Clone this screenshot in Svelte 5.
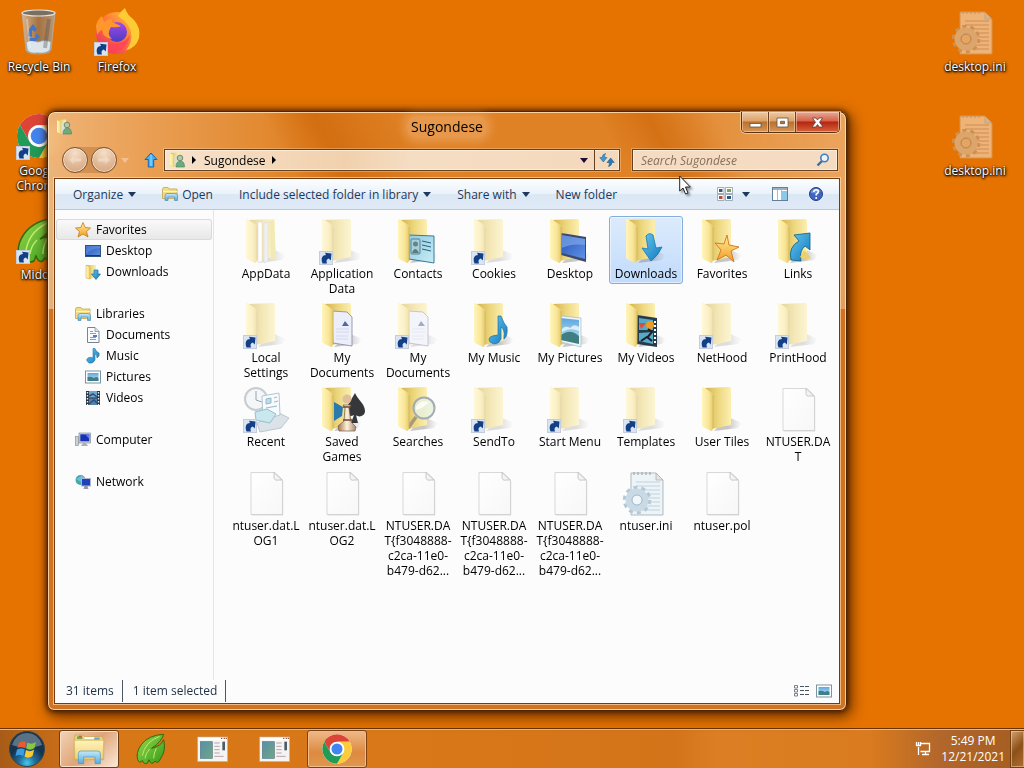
<script>
  const shortcuts = [
    { name: 'Recycle Bin', icon: 'bin', col: 1, row: 1 },
    { name: 'Firefox', icon: 'firefox', col: 2, row: 1, link: true },
    { name: 'Google Chrome', icon: 'chrome', col: 1, row: 2, link: true },
    { name: 'Midori', icon: 'midori', col: 1, row: 3, link: true },
  ];

  const iniFiles = ['desktop.ini', 'desktop.ini'];

  const places = [
    { name: 'Favorites', icon: 'star', children: [
      { name: 'Desktop', icon: 'screen' },
      { name: 'Downloads', icon: 'downloads' },
    ] },
    { name: 'Libraries', icon: 'library', children: [
      { name: 'Documents', icon: 'document' },
      { name: 'Music', icon: 'note' },
      { name: 'Pictures', icon: 'picture' },
      { name: 'Videos', icon: 'film' },
    ] },
    { name: 'Computer', icon: 'computer', children: [] },
    { name: 'Network', icon: 'network', children: [] },
  ];

  const files = [
    { name: 'AppData', icon: 'folder', inner: 'papers', faded: true },
    { name: 'Application Data', icon: 'folder', faded: true, link: true },
    { name: 'Contacts', icon: 'folder', inner: 'card' },
    { name: 'Cookies', icon: 'folder', faded: true, link: true },
    { name: 'Desktop', icon: 'folder', inner: 'screen' },
    { name: 'Downloads', icon: 'folder', inner: 'arrow' },
    { name: 'Favorites', icon: 'folder', inner: 'star' },
    { name: 'Links', icon: 'folder', inner: 'link' },
    { name: 'Local Settings', icon: 'folder', faded: true, link: true },
    { name: 'My Documents', icon: 'folder', inner: 'doc' },
    { name: 'My Documents', icon: 'folder', inner: 'doc', faded: true, link: true },
    { name: 'My Music', icon: 'folder', inner: 'note' },
    { name: 'My Pictures', icon: 'folder', inner: 'photo' },
    { name: 'My Videos', icon: 'folder', inner: 'film' },
    { name: 'NetHood', icon: 'folder', faded: true, link: true },
    { name: 'PrintHood', icon: 'folder', faded: true, link: true },
    { name: 'Recent', icon: 'recent', link: true },
    { name: 'Saved Games', icon: 'folder', inner: 'games' },
    { name: 'Searches', icon: 'folder', inner: 'lens' },
    { name: 'SendTo', icon: 'folder', faded: true, link: true },
    { name: 'Start Menu', icon: 'folder', faded: true, link: true },
    { name: 'Templates', icon: 'folder', faded: true, link: true },
    { name: 'User Tiles', icon: 'folder' },
    { name: 'NTUSER.DAT', lines: ['NTUSER.DA', 'T'], icon: 'file' },
    { name: 'ntuser.dat.LOG1', lines: ['ntuser.dat.L', 'OG1'], icon: 'file' },
    { name: 'ntuser.dat.LOG2', lines: ['ntuser.dat.L', 'OG2'], icon: 'file' },
    { name: 'NTUSER.DAT{f3048888', lines: ['NTUSER.DA', 'T{f3048888-', 'c2ca-11e0-', 'b479-d62...'], icon: 'file' },
    { name: 'NTUSER.DAT{f3048888', lines: ['NTUSER.DA', 'T{f3048888-', 'c2ca-11e0-', 'b479-d62...'], icon: 'file' },
    { name: 'NTUSER.DAT{f3048888', lines: ['NTUSER.DA', 'T{f3048888-', 'c2ca-11e0-', 'b479-d62...'], icon: 'file' },
    { name: 'ntuser.ini', icon: 'ini' },
    { name: 'ntuser.pol', icon: 'file' },
  ];

  const tasks = [
    { name: 'Windows Explorer', icon: 'explorer', state: 'active' },
    { name: 'Midori', icon: 'midori', state: '' },
    { name: 'Program', icon: 'app', state: '' },
    { name: 'Program', icon: 'app', state: '' },
    { name: 'Google Chrome', icon: 'chrome', state: 'open' },
  ];

  let selected = 5;
  let place = 'Favorites';
  let query = '';
</script>

{#snippet shortcutArrow()}
  <rect x="1.500" y="34.500" width="13" height="13" fill="#dbe4f1" stroke="#c3cddd" />
  <path d="M4.500 46.500 C2.500 41 4.500 38 8 38 L7 35.800 L13.500 36.500 L12.800 43.500 L10.800 41.500 C8.500 42 8 44 9 46.500 Z" fill="#123f86" />
{/snippet}

{#snippet bigIcon(kind, inner, faded, link)}
  <svg class="big" viewBox="0 0 48 48" aria-hidden="true">
    {#if kind === 'folder'}
      <g opacity={faded ? 0.55 : 1}>
        <path d="M30 32 L44 38 L40 43 L16 46 Z" fill="url(#shade)" />
        <path d="M6 3 L31 2 Q33 2 33 4 L33 40 L14 44 Z" fill="url(#back)" />
        {#if inner === 'papers'}
          <path d="M16 5 H20 V45 H16 Z" fill="#fff" stroke="#b8b8b8" stroke-width=".5" />
          <path d="M22 6 L26 5 V44 L22 46 Z" fill="#e5e5e2" stroke="#bbb" stroke-width=".5" />
          <path d="M27 4 L32 3 L34 41 L29 43 Z" fill="#eadb78" />
        {:else if inner === 'card'}
          <path d="M15 18 L40 19 V46 L15 42 Z" fill="url(#cardblue)" stroke="#39799d" />
          <rect x="17" y="22" width="9" height="15" rx="1" fill="#a9cfd9" stroke="#567f99" />
          <circle cx="21.500" cy="27" r="2.500" fill="#60858a" />
          <path d="M18 36 Q21 28 25 36 Z" fill="#568078" />
          <path d="M28 24 L37 26 M28 28 L37 30 M28 32 L37 34" stroke="#256082" />
        {:else if inner === 'screen'}
          <path d="M15 16 L40 20 L40 45 L15 38 Z" fill="#3b4a6a" />
          <path d="M16 18 L39 22 L39 42 L16 36 Z" fill="url(#screenblue)" />
          <path d="M16 18 L39 22 L39 28 Q26 26 16 31 Z" fill="#89b0f0" opacity=".6" />
        {:else if inner === 'arrow'}
          <path d="M24 19 Q27 15 31 18 L34 31 L40 30 Q36 39 29 44 L20 31 L26 32 Z" fill="url(#blue)" stroke="#1775b4" stroke-width=".8" />
        {:else if inner === 'star'}
          <path d="M29 18 L31 28 L41 30 L33 34 L36 45 L28 38 L19 43 L23 33 L17 26 L26 27 Z" fill="url(#gold)" stroke="#d3741c" stroke-width=".9" />
        {:else if inner === 'link'}
          <path d="M20 18 L36 16 L36 33 L31 29 Q25 34 27 44 L17 43 Q14 30 25 24 Z" fill="url(#blue)" stroke="#086087" stroke-width=".8" />
          <path d="M26 40 L30 33 L34 37 L37 41 L31 43 Z" fill="#ebcf71" />
        {:else if inner === 'doc'}
          <path d="M14 10 L29 11 L34 16 V45 L15 42 Z" fill="#eceffa" stroke="#8385a7" stroke-width=".8" />
          <path d="M27 20 L31 25 L24 25 Z" fill="#4f6a9f" />
          <path d="M18 28 H31 M18 31 H31 M18 35 H30 M18 38 H30" stroke="#d3d7ec" />
        {:else if inner === 'note'}
          <path d="M28 15 L31 15 Q34 23 37 26 Q38 35 34 38 Q35 28 31 26 L31 38 Q27 46 20 41 Q16 35 28 34 Z" fill="url(#blue)" stroke="#1c73a4" stroke-width=".7" />
        {:else if inner === 'photo'}
          <path d="M15 15 L35 17 V46 L15 41 Z" fill="#edf5fa" stroke="#a5bac7" stroke-width=".7" />
          <path d="M15 17 L33 19 V43 L15 39 Z" fill="url(#sky)" />
          <path d="M15 34 Q24 27 33 35 V43 L15 39 Z" fill="#3f7f81" />
          <path d="M16 28 Q20 24 24 27 Q28 22 33 26 V30 Q24 26 16 31 Z" fill="#fff" opacity=".7" />
        {:else if inner === 'film'}
          <path d="M15 14 L35 17 V46 L15 43 Z" fill="#263c4a" />
          <path d="M17 17 L31 19 V29 L17 29 Z M17 32 L31 31 V43 L17 40 Z" fill="#56a9c7" />
          <circle cx="28" cy="24" r="4" fill="#ee9b22" />
          <path d="M17 22 L24 22 L19 28 Z" fill="#df4c3b" />
          <path d="M26 28 L30 31 L25 37 M19 40 L25 36 L30 40" fill="none" stroke="#16222c" stroke-width="2" />
          <path d="M33 20 V44" stroke="#fff" stroke-width="2" stroke-dasharray="2 2" />
        {:else if inner === 'games'}
          <path d="M16 17 L25 22 L24 31 L16 36 Z" fill="#2c79ac" />
          <path d="M37 8 C40 15 47 19 47 26 C47 31 41 33 38 30 L40 38 H33 L36 30 C29 34 27 25 30 20 Z" fill="#35373b" />
          <circle cx="29" cy="14" r="4.500" fill="#dec09e" />
          <path d="M25 20 H33 L31 23 L33 37 L38 42 L37 46 H21 L20 41 L26 36 L27 23 Z" fill="url(#pawn)" stroke="#745a45" stroke-width=".7" />
          <path d="M25 22 H33 M25 35 H34" stroke="#6f4935" stroke-width="1.500" />
        {:else if inner === 'lens'}
          <path d="M22 32 L14 43" stroke="#a79a79" stroke-width="3.500" />
          <circle cx="30" cy="23" r="10.500" fill="#e9f0db" fill-opacity=".85" stroke="#a3adb0" stroke-width="2" />
          <path d="M22 22 Q26 14 35 17 Q30 23 22 25 Z" fill="#fff" opacity=".8" />
        {/if}
        <path d="M4 3 Q4 1 7 3 L14 8 Q15.500 9 15.500 11 L15 43 Q15 47 12 45.500 L5 42 Q4 41.500 4 40 Z" fill="url(#flap)" />
        <path d="M15 10 V43" stroke="#cfb55d" stroke-width=".8" />
      </g>
    {:else if kind === 'file'}
      <path d="M9 3.500 H33 L40.500 11 V45.500 H9 Z" fill="#dcdcdc" transform="translate(.7 .9)" />
      <path d="M9 3.500 H33 L40.500 11 V45.500 H9 Z" fill="url(#page)" stroke="#c8c8c8" stroke-width=".7" />
      <path d="M32 3.500 V8 Q32 12 36 11 H40 Z" fill="#f4f4f4" stroke="#b5b5b5" stroke-width=".7" />
    {:else if kind === 'ini' || kind === 'iniDesk'}
      <g opacity={kind === 'ini' ? 1 : 0.85}>
        <path d="M9 4 H34 L41 11 V46 H9 Z" fill={kind === 'ini' ? '#edf4f8' : '#f1bf8d'} stroke={kind === 'ini' ? '#adb9c1' : '#d69756'} />
        <path d="M34 4 V11 H41 Z" fill={kind === 'ini' ? '#e3e6e8' : '#cfc0ab'} stroke="#a79d92" stroke-width=".6" />
        <path d="M12 3 V6 M16 3 V6 M20 3 V6 M24 3 V6 M28 3 V6" stroke="#9f9e95" />
        <path d="M14 13 H38 M14 17 H38 M14 21 H38 M14 25 H38 M14 29 H38 M14 33 H38 M14 37 H38 M14 41 H38" stroke={kind === 'ini' ? '#b6cad7' : '#bd8a5b'} stroke-width=".8" />
        <circle cx="15" cy="31" r="12.500" fill="none" stroke={kind === 'ini' ? '#b3c8d8' : '#c99661'} stroke-width="3.500" stroke-dasharray="4 3.850" />
        <circle cx="15" cy="31" r="8" fill="none" stroke={kind === 'ini' ? '#c9dae5' : '#dbae7e'} stroke-width="7" />
        <circle cx="15" cy="31" r="5" fill={kind === 'ini' ? '#f2f7fb' : '#e6ad72'} stroke={kind === 'ini' ? '#8ea9bc' : '#a77a50'} stroke-width=".8" />
      </g>
    {:else if kind === 'recent'}
      <path d="M15 38 L37 28 L47 33 L39 43 L18 47 Z" fill="#dbe3e8" stroke="#a8b5bd" stroke-width=".7" />
      <circle cx="14" cy="14" r="11" fill="#f4f6f7" stroke="#c5cdd2" stroke-width="2" />
      <path d="M14 6 V15 L20 17" fill="none" stroke="#98a4ae" />
      <path d="M20 11 L37 8 L38 30 L21 35 Z" fill="#f7fbfd" stroke="#b4c5cf" />
      <path d="M24 14 L29 13 V18 L24 19 Z M32 13 L35 12 M32 17 L36 16 M24 23 L35 21" fill="#c2dae5" stroke="#95b9c9" />
      <path d="M13 27 L25 24 L34 29 L28 38 L14 35 Z" fill="#c8e7ef" stroke="#99becb" />
    {:else if kind === 'bin'}
      <path d="M7 5 L40 5 L36 42 Q35 46 23 46 Q12 46 11 42 Z" fill="url(#glass)" stroke="#b2afa9" stroke-width=".8" />
      <ellipse cx="23.500" cy="5" rx="16.500" ry="3" fill="#796f61" stroke="#e3e2df" stroke-width="1.200" />
      <path d="M11 34 Q16 31 23 34 Q31 31 36 34 L35 42 Q31 46 23 45 Q13 46 12 41 Z" fill="#dce5e9" stroke="#8ea3ad" stroke-width=".8" />
      <path d="M14 21 L18 16 L22 21 L20 24 L17 22 L17 29 L13 28 Z M21 25 L25 29 L21 33 L14 33 L14 30 L20 30 Z" fill="#4675c3" />
      <path d="M12 11 L15 40" stroke="#fff" stroke-width="2" opacity=".3" />
      <path d="M34 11 L30 40" stroke="#534b44" stroke-width="4" opacity=".35" />
    {:else if kind === 'firefox'}
      <circle cx="24" cy="25" r="21" fill="url(#fox)" />
      <path d="M25 8 Q28 3 32 0 Q34 7 41 12 Q48 20 46 30 Q43 40 33 42 Q40 34 38 24 Q36 15 25 8 Z" fill="#ffcb35" />
      <circle cx="24" cy="24" r="10" fill="url(#purple)" />
      <path d="M3 18 Q4 12 9 8 L11 14 Q14 11 19 11 L19 14 L28 18 Q25 20 18 19 Q13 26 19 31 Q10 30 9 22 Q7 22 4 27 Z" fill="#ff972c" />
      <path d="M5 30 Q13 39 25 35 Q33 34 37 27 Q35 41 23 44 Q11 44 5 30 Z" fill="#ff4257" opacity=".8" />
    {:else if kind === 'chrome'}
      <circle cx="24" cy="24" r="22" fill="#fff" />
      <path d="M4.950 13 A22 22 0 0 1 43.050 13 H24 A11 11 0 0 0 14.500 29.500 Z" fill="#dd4438" />
      <path d="M4.950 13 A22 22 0 0 1 43.050 13 H24 A11 11 0 0 0 14.500 29.500 Z" fill="#fdcc3d" transform="rotate(120 24 24)" />
      <path d="M4.950 13 A22 22 0 0 1 43.050 13 H24 A11 11 0 0 0 14.500 29.500 Z" fill="#219b57" transform="rotate(240 24 24)" />
      <circle cx="24" cy="24" r="10.500" fill="#fff" />
      <circle cx="24" cy="24" r="8.300" fill="#4285f0" />
    {:else if kind === 'midori'}
      <path d="M43 2 Q20 3 9 18 Q1 30 4 40 Q7 47 11 41 Q13 48 19 45 L21 40 Q25 50 30 42 Q35 47 38 39 Q47 27 43 10 Q40 19 25 23 Q40 13 43 2 Z" fill="url(#leaf)" stroke="#2f6c0f" stroke-width="1.500" />
      <path d="M37 5 Q15 13 11 34 M22 24 Q16 30 15 38 M32 23 Q28 30 28 38" fill="none" stroke="#bdec70" stroke-width="1.500" />
    {:else if kind === 'explorer'}
      <path d="M2 9 L3 3 H16 L18 6 L43 5 L46 10 V40 H2 Z" fill="#eed274" stroke="#bfa04c" />
      <path d="M6 5 H14 V9 H6 Z" fill="#67a962" /><path d="M17 6 H32 V9 H17 Z" fill="#f8f8ef" /><path d="M32 7 H40 V10 H32 Z" fill="#6aa1cb" />
      <path d="M9 5 H13" stroke="#d85140" stroke-width="2" />
      <path d="M2 11 H46 L45 39 H3 Z" fill="url(#foldfront)" stroke="#d6b65d" />
      <path d="M8 46 V31 Q8 27 12 27 H37 Q41 27 41 31 V46 H33 V36 H16 V46 Z" fill="url(#clip)" stroke="#4a92c4" />
    {:else if kind === 'app'}
      <rect x="1" y="6" width="45" height="37" fill="#f5f4f2" stroke="#b8aea5" />
      <path d="M2 7 H45 V11 H2 Z" fill="#fff" /><path d="M36 8 H38 M40 8 H42 M43 8 H45" stroke="#9e5850" stroke-width="2" />
      <rect x="5" y="13" width="18" height="25" fill="url(#tile)" stroke="#547a82" />
      <path d="M26 15 H34 M26 20 H34 M26 25 H34 M26 30 H34 M26 35 H40" stroke="#b7a3ae" stroke-width="1.500" />
      <rect x="38" y="13" width="4" height="13" fill="#4d5d67" />
    {/if}
    {#if link}{@render shortcutArrow()}{/if}
  </svg>
{/snippet}

{#snippet smallIcon(kind)}
  <svg class="small" viewBox="0 0 16 16" aria-hidden="true">
    {#if kind === 'star'}
      <path d="M8 .500 L10.200 5.500 L15.500 6 L11.500 9.500 L13 15 L8 12 L3 15 L4.500 9.500 L.500 6 L5.800 5.500 Z" fill="url(#gold)" stroke="#bf7a23" stroke-width=".8" />
    {:else if kind === 'screen'}
      <rect x=".500" y="2.500" width="15" height="11" fill="url(#screenblue)" stroke="#35517f" />
      <path d="M1 12.500 H15" stroke="#273753" /><path d="M1 11 Q7 5 15 5 V3 H1 Z" fill="#7fa8ed" opacity=".4" />
    {:else if kind === 'downloads'}
      <path d="M1 1 H11 V13 L5 15 L1 14 Z" fill="url(#back)" /><path d="M1 1 L5 3 V15 L1 14 Z" fill="url(#flap)" stroke="#cfae4c" stroke-width=".5" />
      <path d="M9 6 H13 V10 H15.500 L11 15.500 L6.500 10 H9 Z" fill="url(#blue)" stroke="#216d9e" stroke-width=".7" />
    {:else if kind === 'library'}
      <path d="M.500 3 L1.500 1.500 H6 L7 3 H15 V12.500 H.500 Z" fill="#f4dc84" stroke="#c5a44c" stroke-width=".8" />
      <path d="M1 5.500 H15" stroke="#fff4bd" />
      <path d="M3 14.500 V9.500 Q3 7.500 5 7.500 H13 Q15.500 7.500 15.500 9.500 V14.500 H12.500 V11 H6 V14.500 Z" fill="url(#clip)" stroke="#568fb1" stroke-width=".7" />
    {:else if kind === 'document'}
      <path d="M2.500 .500 H10 L14 4.500 V15.500 H2.500 Z" fill="#fbfcff" stroke="#768596" /><path d="M10 .500 V4.500 H14" fill="#dde3ed" stroke="#768596" stroke-width=".7" />
      <path d="M5 4.500 H8 M5 6.500 H11 M5 10.500 H11 M5 12.500 H11" stroke="#8c9dba" /><path d="M8 8 H12 V10 H8 Z" fill="#567fb6" />
    {:else if kind === 'note'}
      <path d="M8 .500 H10 Q11 4 14 5 Q15 8 12 10 Q12 6 10 6 V12 Q8 16 4 15 Q0 12 3 10 Q5 8.500 8 10 Z" fill="url(#blue)" stroke="#2674a7" stroke-width=".6" />
    {:else if kind === 'picture'}
      <rect x=".500" y="2" width="15" height="12" fill="#fff" stroke="#7895a0" /><rect x="2.500" y="4" width="11" height="8" fill="url(#sky)" />
      <path d="M2.500 8 Q6 7 9 9 Q11 7 13.500 9 V12 H2.500 Z" fill="#3f7f8c" />
    {:else if kind === 'film'}
      <rect x="1" y="1" width="14" height="14" fill="#273443" /><rect x="4" y="1" width="8" height="6.500" fill="#6da7cf" /><rect x="4" y="8.500" width="8" height="6.500" fill="#5082ad" />
      <path d="M2.500 2 V15 M13.500 2 V15" stroke="#edf0f2" stroke-width="1.400" stroke-dasharray="1.500 1.500" /><path d="M4 6 L8 4 L12 7 M4 14 L9 10 L12 13" stroke="#314d7a" stroke-width="1.500" fill="none" />
    {:else if kind === 'computer'}
      <rect x=".500" y="4.500" width="3" height="9" fill="#cbcfd2" stroke="#8c949c" stroke-width=".7" /><rect x="4" y="1" width="11.500" height="10" fill="#d0d4db" stroke="#858e9b" stroke-width=".7" />
      <rect x="5.300" y="2.300" width="9" height="7" fill="#1932b4" /><path d="M10 2.300 H14.300 V7 Z" fill="#607be7" /><path d="M8 11 H11 L13 14 H6 Z" fill="#a9b0b6" />
    {:else if kind === 'network'}
      <circle cx="5.500" cy="6" r="5" fill="#44aba2" /><path d="M1 5 Q5 3 7 1 Q9 3 10 5 L6 8 Z" fill="#72bae3" />
      <rect x="6.500" y="4.500" width="9" height="7.500" fill="#2340bd" stroke="#adb7ca" /><path d="M9.500 12 H12.500 L13.500 15 H8.500 Z" fill="#919ba5" />
    {:else if kind === 'user'}
      <path d="M1 1 L10 .500 V13 L5 15 L1 13 Z" fill="url(#back)" /><path d="M1 1 L5 3 V15 L1 13 Z" fill="url(#flap)" />
      <path d="M5.500 4 L9 3.500 V14 L5.500 15 Z" fill="#dbe0d6" />
      <circle cx="11" cy="6" r="2.800" fill="#b7c6a4" stroke="#5b7d60" stroke-width=".8" /><path d="M7 15 Q7 9 11.500 9 Q15.500 9 15.500 15 Z" fill="#6bac7d" stroke="#4b7c66" stroke-width=".6" />
    {/if}
  </svg>
{/snippet}

{#snippet caret()}
  <svg class="caret" viewBox="0 0 8 5" aria-hidden="true"><path d="M0 0 H8 L4 5 Z" fill="currentColor" /></svg>
{/snippet}

<svg class="defs" aria-hidden="true">
  <defs>
    <linearGradient id="flap"><stop offset="0" stop-color="#fff5bb" /><stop offset=".6" stop-color="#f9e596" /><stop offset="1" stop-color="#e3c868" /></linearGradient>
    <linearGradient id="back"><stop offset="0" stop-color="#d2b14c" /><stop offset=".55" stop-color="#eed880" /><stop offset="1" stop-color="#fbefb2" /></linearGradient>
    <linearGradient id="shade"><stop offset=".5" stop-color="#777" stop-opacity=".4" /><stop offset="1" stop-color="#888" stop-opacity="0" /></linearGradient>
    <linearGradient id="blue" x1="0" y1="0" x2="1" y2="1"><stop offset="0" stop-color="#64c7ef" /><stop offset="1" stop-color="#1279be" /></linearGradient>
    <linearGradient id="gold" x1="0" y1="0" x2="0" y2="1"><stop offset="0" stop-color="#fff19a" /><stop offset="1" stop-color="#f29a25" /></linearGradient>
    <linearGradient id="screenblue" x1="0" y1="0" x2="1" y2="1"><stop offset="0" stop-color="#2853b8" /><stop offset="1" stop-color="#5f93e6" /></linearGradient>
    <linearGradient id="cardblue" x1="0" y1="0" x2="1" y2="1"><stop offset="0" stop-color="#8fc9df" /><stop offset="1" stop-color="#c9edf3" /></linearGradient>
    <linearGradient id="sky" x1="0" y1="0" x2="0" y2="1"><stop offset="0" stop-color="#5da6df" /><stop offset="1" stop-color="#c8e9ee" /></linearGradient>
    <linearGradient id="pawn"><stop offset="0" stop-color="#a5724d" /><stop offset=".5" stop-color="#fff2db" /><stop offset="1" stop-color="#a4856c" /></linearGradient>
    <linearGradient id="page" x1="0" y1="0" x2="1" y2="1"><stop offset="0" stop-color="#fff" /><stop offset="1" stop-color="#f7f7f7" /></linearGradient>
    <linearGradient id="glass"><stop offset="0" stop-color="#d7c6b2" stop-opacity=".8" /><stop offset=".5" stop-color="#8a725c" stop-opacity=".7" /><stop offset="1" stop-color="#b4a18d" stop-opacity=".9" /></linearGradient>
    <linearGradient id="fox" x1="1" y1="0" x2="0" y2="1"><stop offset="0" stop-color="#ffd83b" /><stop offset=".5" stop-color="#ff7139" /><stop offset="1" stop-color="#e62372" /></linearGradient>
    <linearGradient id="purple" x1="0" y1="0" x2="0" y2="1"><stop offset="0" stop-color="#a449e6" /><stop offset="1" stop-color="#4b3cc4" /></linearGradient>
    <linearGradient id="leaf" x1="0" y1="0" x2="1" y2="1"><stop offset="0" stop-color="#9bd94a" /><stop offset="1" stop-color="#349c1d" /></linearGradient>
    <linearGradient id="foldfront" x1="0" y1="0" x2="0" y2="1"><stop offset="0" stop-color="#fff2b9" /><stop offset="1" stop-color="#efd278" /></linearGradient>
    <linearGradient id="clip" x1="0" y1="0" x2="0" y2="1"><stop offset="0" stop-color="#c4e8f9" /><stop offset="1" stop-color="#56abdd" /></linearGradient>
    <linearGradient id="tile" x1="0" y1="0" x2="1" y2="1"><stop offset="0" stop-color="#578eaa" /><stop offset="1" stop-color="#70a782" /></linearGradient>
    <radialGradient id="orb" cx=".5" cy=".9"><stop offset="0" stop-color="#48c9ef" /><stop offset=".45" stop-color="#236f9c" /><stop offset="1" stop-color="#153450" /></radialGradient>
  </defs>
</svg>

<div class="screen">
  <main class="desktop">
    <div class="shortcuts">
      {#each shortcuts as item}
        <button class="shortcut" style="grid-column: {item.col}; grid-row: {item.row}">
          {@render bigIcon(item.icon, '', false, item.link)}
          <span>{item.name}</span>
        </button>
      {/each}
    </div>
    <div class="shortcuts right">
      {#each iniFiles as name}
        <button class="shortcut">
          {@render bigIcon('iniDesk', '', false, false)}
          <span>{name}</span>
        </button>
      {/each}
    </div>

    <section class="window" aria-label="Sugondese">
      <header class="titlebar">
        <span class="title-icon">{@render smallIcon('user')}</span>
        <h1>Sugondese</h1>
        <div class="controls">
          <button aria-label="Minimize"><svg viewBox="0 0 13 11"><rect x="1" y="6.500" width="11" height="3.500" fill="#fff" stroke="#66513d" stroke-width=".8" /></svg></button>
          <button aria-label="Maximize"><svg viewBox="0 0 13 11"><path d="M1 1 H12 V10 H1 Z M4.500 4.300 V6.700 H8.500 V4.300 Z" fill="#fff" fill-rule="evenodd" stroke="#66513d" stroke-width=".8" /></svg></button>
          <button class="close" aria-label="Close"><svg viewBox="0 0 13 11"><path d="M1.500 1 H5 L6.500 3 L8 1 H11.500 L8.500 5.300 L12 10 H8.300 L6.500 7.600 L4.700 10 H1 L4.500 5.300 Z" fill="#fff" stroke="#713a31" stroke-width=".8" /></svg></button>
        </div>
      </header>

      <nav class="navbar">
        <div class="history">
          <button class="round" aria-label="Back"><svg viewBox="0 0 14 10"><path d="M6 1 L1 5 L6 9 V6.500 H13 V3.500 H6 Z" fill="#fff" opacity=".3" /></svg></button>
          <button class="round" aria-label="Forward"><svg viewBox="0 0 14 10"><path d="M8 1 L13 5 L8 9 V6.500 H1 V3.500 H8 Z" fill="#fff" opacity=".3" /></svg></button>
        </div>
        <button class="recent" aria-label="Recent pages">{@render caret()}</button>
        <button class="up" aria-label="Up">
          <svg viewBox="0 0 14 16"><path d="M7 1 L13 7.500 H9.700 V15 H4.300 V7.500 H1 Z" fill="#45b0f5" stroke="#1768ae" /><path d="M7 3 V14" stroke="#a0e0ff" /></svg>
        </button>
        <div class="address">
          {@render smallIcon('user')}
          <svg class="chevron" viewBox="0 0 4 8"><path d="M0 0 L4 4 L0 8 Z" /></svg>
          <a href="#sugondese">Sugondese</a>
          <svg class="chevron" viewBox="0 0 4 8"><path d="M0 0 L4 4 L0 8 Z" /></svg>
          <button class="drop" aria-label="Previous locations">{@render caret()}</button>
          <button class="refresh" aria-label="Refresh">
            <svg viewBox="0 0 16 14"><path d="M6.500 .500 Q5.500 2 5.700 4.500 H8 L4.300 9 L.800 4.500 H3.200 Q3 1.500 6.500 .500 Z" fill="#4496cd" stroke="#276b9e" stroke-width=".6" /><path d="M9.500 13.500 Q10.500 12 10.300 9.500 H8 L11.700 5 L15.200 9.500 H12.800 Q13 12.500 9.500 13.500 Z" fill="#287bb8" stroke="#225d91" stroke-width=".6" /></svg>
          </button>
        </div>
        <label class="search">
          <input type="text" placeholder="Search Sugondese" aria-label="Search Sugondese" bind:value={query} />
          <svg viewBox="0 0 14 14"><path d="M6 8 L1.500 12.500" stroke="#376fa9" stroke-width="2.400" /><circle cx="8.500" cy="5" r="3.700" fill="#e9f4fb" stroke="#477fb4" stroke-width="1.600" /></svg>
        </label>
      </nav>

      <div class="client">
        <div class="toolbar">
          <button>Organize {@render caret()}</button>
          <button class="open">{@render smallIcon('library')} Open</button>
          <button>Include selected folder in library {@render caret()}</button>
          <button>Share with {@render caret()}</button>
          <button>New folder</button>
          <div class="tools">
            <button aria-label="Change your view">
              <svg class="small" viewBox="0 0 16 16"><path d="M.500 1.500 H7 V7.500 H.500 Z M8.500 1.500 H15.500 V7.500 H8.500 Z M.500 8.500 H7 V14.500 H.500 Z M8.500 8.500 H15.500 V14.500 H8.500 Z" fill="#fff" stroke="#8c9aab" stroke-width=".8" /><path d="M2 3 H5.500 V6 H2 Z" fill="#455a74" /><path d="M10 3 H14 V6 H10 Z" fill="#79a84e" /><path d="M2 10 H5.500 V13 H2 Z" fill="#b34f35" /><path d="M10 10 H14 V13 H10 Z" fill="#315579" /></svg>
            </button>
            <button class="more" aria-label="More options">{@render caret()}</button>
            <button class="pane" aria-label="Show the preview pane">
              <svg class="small" viewBox="0 0 16 16"><rect x=".500" y="1.500" width="15" height="13" fill="#fff" stroke="#61809d" /><path d="M1 3 H15" stroke="#7797b5" stroke-width="1.500" /><rect x="10" y="5" width="5" height="9" fill="#8ec8e9" /><path d="M5.500 4 V14 M9.500 4 V14" stroke="#a9bdcc" /></svg>
            </button>
            <button aria-label="Get help">
              <svg class="small" viewBox="0 0 16 16"><circle cx="8" cy="8" r="6.500" fill="#3e65c1" stroke="#263f83" /><path d="M3 5 Q8 0 13 5 Q9 8 3 7 Z" fill="#a4bff2" opacity=".5" /><path d="M5.700 6 Q6 3.700 8.200 3.700 Q10.500 3.900 10.300 6 Q10 7.200 8.200 8.300 V9.500" fill="none" stroke="#fff" stroke-width="1.600" /><circle cx="8.200" cy="12" r="1" fill="#fff" /></svg>
            </button>
          </div>
        </div>

        <div class="body">
          <aside class="places">
            {#each places as group}
              <div class="group">
                <button class="place" class:current={place === group.name} on:click={() => (place = group.name)}>
                  {@render smallIcon(group.icon)}{group.name}
                </button>
                {#each group.children as child}
                  <button class="place child">{@render smallIcon(child.icon)}{child.name}</button>
                {/each}
              </div>
            {/each}
          </aside>

          <div class="files">
            {#each files as file, i}
              <button class="file" class:selected={selected === i} on:click={() => (selected = i)}>
                {@render bigIcon(file.icon, file.inner, file.faded, file.link)}
                {#if file.lines}
                  {#each file.lines as line}<span>{line}</span>{/each}
                {:else}
                  <span>{file.name}</span>
                {/if}
              </button>
            {/each}
          </div>
        </div>

        <footer class="status">
          <span>{files.length} items</span>
          <span>1 item selected</span>
          <div class="views">
            <button aria-label="Details"><svg class="small" viewBox="0 0 16 16"><path d="M1.500 2.500 H4.500 V5 H1.500 Z M1.500 6.500 H4.500 V9 H1.500 Z M1.500 10.500 H4.500 V13 H1.500 Z" fill="#fff" stroke="#76808b" /><path d="M7 3.500 H16 M7 7.500 H16 M7 11.500 H16" stroke="#46525f" stroke-dasharray="4 1" /></svg></button>
            <button aria-label="Large icons">{@render smallIcon('picture')}</button>
          </div>
        </footer>
      </div>
    </section>

    <svg class="cursor" viewBox="0 0 12 20" aria-hidden="true"><path d="M.700 1 V16 L4 13 L6.500 19 L9 18 L6.500 12 H11.300 Z" fill="#fff" stroke="#222" /></svg>
  </main>

  <footer class="taskbar">
    <button class="start" aria-label="Start">
      <svg viewBox="0 0 38 38">
        <circle cx="19" cy="19" r="17.500" fill="url(#orb)" stroke="#34444d" />
        <path d="M4 15 Q8 3 19 3 Q30 3 34 15 Q19 21 4 15 Z" fill="#fff" opacity=".3" />
        <path d="M11 13 Q15 10 18 12 L17 18 Q13 16 9.500 18 Z" fill="#ed5a2b" />
        <path d="M19.500 12.500 Q23 15 28 12 L26.500 18 Q22 21 18.300 18.500 Z" fill="#8cc63f" />
        <path d="M9 19.500 Q13 17.500 16.700 19.500 L15.300 26 Q11 24 7.500 26 Z" fill="#3d9de2" />
        <path d="M18 20 Q22 22.500 26.200 19.500 L24.500 26 Q20 29 16.500 26.500 Z" fill="#fbc92f" />
      </svg>
    </button>
    <div class="tasks">
      {#each tasks as task}
        <button class="task {task.state}" aria-label={task.name}>{@render bigIcon(task.icon, '', false, false)}</button>
      {/each}
    </div>
    <button class="net" aria-label="Network status">
      <svg class="small" viewBox="0 0 16 16"><path d="M6 2.500 H14.500 V10.500 H5.500 M10.500 10.500 V13.500 M7 13.500 H14 M3.500 6 V14 M1.500 1 V4.500 H5.500 V1 M3.500 1 V5" fill="none" stroke="#fff" stroke-width="1.300" /></svg>
    </button>
    <button class="clock"><span>5:49 PM</span><span>12/21/2021</span></button>
    <button class="peek" aria-label="Show desktop"></button>
  </footer>
</div>

<style>
  :global(body) {
    background: #e67300;
  }

  .screen {
    height: 100vh; display: flex; flex-direction: column; overflow: hidden;
    background: #e67300; color: #000;
    font: 12px/15px "Open Sans", "Noto Sans", sans-serif;
  }

  button {
    border: 0; padding: 0; margin: 0; background: none;
    color: inherit; font: inherit; text-align: inherit;
  }

  svg { display: block; flex: none; }
  .defs { position: absolute; width: 0; height: 0; }
  .big { width: 48px; height: 48px; }
  .small { width: 16px; height: 16px; }
  .caret { width: 8px; height: 5px; }

  .desktop {
    position: relative; flex: 1; min-height: 0;
    display: flex; justify-content: space-between; align-items: flex-start;
  }

  .shortcuts {
    display: grid; grid-template-columns: 76px 76px; grid-auto-rows: 104px;
    column-gap: 2px; padding: 8px 1px;
  }
  .shortcuts.right { grid-template-columns: 76px; padding-right: 11px; }

  .shortcut {
    display: flex; flex-direction: column; align-items: center; gap: 3px;
    align-self: start; color: #fff; text-align: center;
    text-shadow: 0 1px 2px #000, 1px 1px 3px #000, 0 0 2px #000;
  }

  .window {
    position: absolute; inset: 111px 177px 17px 47px;
    display: flex; flex-direction: column; padding: 0 6px 6px;
    border: 1px solid #4c2503; border-radius: 8px 8px 7px 7px;
    background:
      linear-gradient(62deg, transparent 30%, rgba(200, 95, 0, .55) 36%, transparent 47%, transparent 70%, rgba(200, 95, 0, .55) 76%, transparent 84%) 0 0 / 100% 68px no-repeat,
      linear-gradient(90deg, rgba(255, 236, 210, .5), rgba(255, 225, 190, .35) 12%, rgba(255, 225, 190, .05) 32%, rgba(255, 225, 190, .05) 72%, rgba(255, 225, 190, .4)) 0 0 / 100% 197px no-repeat,
      linear-gradient(rgba(221, 126, 34, .85) 68px, rgba(205, 115, 40, .85) 200px);
    backdrop-filter: blur(3px);
    box-shadow: inset 0 0 0 1px rgba(255, 229, 194, .8), 0 0 5px 1px rgba(50, 20, 0, .8), 3px 4px 14px 2px rgba(60, 25, 0, .7);
  }

  .titlebar {
    height: 36px; flex: none;
    display: grid; grid-template-columns: 1fr auto 1fr; align-items: start;
  }
  .title-icon { padding: 7px 2px; }

  h1 {
    margin: 4px 0 0; padding: 0 4px; font-size: 14px; line-height: 22px; font-weight: 400;
    border-radius: 10px; background: rgba(255, 225, 190, .25);
    box-shadow: 0 0 8px 4px rgba(255, 225, 190, .25);
  }

  .controls {
    justify-self: end; display: flex; height: 20px;
    border: 1px solid #5b3415; border-top: 0; border-radius: 0 0 5px 5px;
    box-shadow: 0 0 0 1px rgba(255, 225, 190, .6); overflow: hidden;
  }
  .controls button {
    width: 27px; display: grid; place-items: center; border-right: 1px solid #6b4322;
    background: linear-gradient(#efc9a2, #dda169 45%, #b9702d 50%, #d79555);
    box-shadow: inset 0 0 0 1px rgba(255, 235, 210, .45);
  }
  .controls svg { width: 13px; height: 11px; }
  .controls .close {
    width: 43px; border: 0;
    background: linear-gradient(#eba894, #d4624a 45%, #b32510 50%, #d8633a);
  }

  .navbar {
    height: 24px; margin-bottom: 6px; padding: 0 2px 0 8px; flex: none;
    display: flex; align-items: center;
  }
  .history { display: flex; gap: 3px; border-radius: 13px; background: rgba(130, 65, 15, .25); }
  .round {
    width: 26px; height: 26px; display: grid; place-items: center; border-radius: 50%;
    border: 1px solid #7b532f;
    background: radial-gradient(circle at 50% 20%, #f6dfc9, #e0b896 55%, #d4a27a);
    box-shadow: inset 0 0 0 1px rgba(255, 240, 222, .7);
  }
  .round svg { width: 14px; height: 10px; }
  .recent { margin-left: 4px; color: #f6bf8f; }
  .up { margin: 0 6px 0 15px; }
  .up svg { width: 14px; height: 16px; }

  .address, .search {
    height: 22px; box-sizing: border-box; display: flex; align-items: center;
    border: 1px solid #67401e;
    background: linear-gradient(100deg, #f7e2cc, #f1d1ad 40%, #f5ddc4 55%, #f4d8bb);
    box-shadow: inset 0 0 0 1px rgba(255, 244, 230, .75), 0 0 0 1px rgba(255, 220, 180, .35);
  }
  .address { flex: 1; padding-left: 4px; }
  .address a { margin: 0 6px 0 8px; color: #000; text-decoration: none; }
  .chevron { width: 4px; height: 8px; }
  .address > .small { margin-right: 7px; }
  .drop { margin-left: auto; width: 20px; height: 20px; display: grid; place-items: center; color: #1d0a35; }
  .refresh { width: 25px; height: 20px; display: grid; place-items: center; border-left: 1px solid #67401e; }
  .refresh svg { width: 16px; height: 14px; }

  .search { width: 206px; margin-left: 12px; padding: 0 7px 0 8px; background: #f4dbc1; }
  .search input {
    flex: 1; min-width: 0; padding: 0; border: 0; outline: 0; background: none;
    font: inherit; color: #000;
  }
  .search input::placeholder { color: #85705d; font-style: italic; opacity: 1; }
  .search svg { width: 14px; height: 14px; }

  .client {
    flex: 1; min-height: 0; display: flex; flex-direction: column;
    border: 1px solid #743a10; background: #fcfcfc;
    box-shadow: 0 0 0 1px rgba(255, 222, 184, .65);
  }

  .toolbar {
    height: 31px; flex: none; padding: 0 15px 0 18px; display: flex; align-items: center; gap: 26px;
    border-bottom: 1px solid #b5cbe1; color: #1e395b;
    background: linear-gradient(#fdfeff, #eaf2fb 48%, #dce7f5 52%, #e0eaf7);
    white-space: nowrap; box-sizing: border-box;
  }
  .toolbar button { display: flex; align-items: center; gap: 5px; }
  .toolbar .open { gap: 4px; }
  .tools { margin-left: auto; display: flex; align-items: center; }
  .toolbar .more { margin: 0 22px 0 9px; }
  .toolbar .pane { margin-right: 20px; }

  .body { flex: 1; min-height: 0; display: flex; }

  .places {
    width: 159px; flex: none; padding: 9px 1px 0; box-sizing: border-box;
    border-right: 1px solid #dfe6ee;
  }
  .group { margin-bottom: 21px; }
  .place {
    width: 100%; height: 21px; padding-left: 19px; box-sizing: border-box;
    display: flex; align-items: center; gap: 5px; border-radius: 3px;
  }
  .place.child { padding-left: 29px; }
  .place.current {
    background: linear-gradient(#fafafa, #e7e7e8);
    box-shadow: inset 0 0 0 1px #dadada;
  }

  .files {
    flex: 1; padding: 6px 0 0 14px; overflow: hidden;
    display: grid; grid-template-columns: repeat(auto-fill, 76px);
    grid-auto-rows: minmax(84px, max-content); align-content: start;
  }
  .file {
    width: 74px; height: max-content; margin: 0 1px; padding-bottom: 2px; border: 1px solid transparent;
    display: flex; flex-direction: column; align-items: center;
    box-sizing: border-box; border-radius: 3px; text-align: center;
  }
  .file .big { margin-bottom: 1px; }
  .file.selected {
    border-color: #84acdd; background: linear-gradient(#dcebfc, #c1dbfc);
    box-shadow: inset 0 0 0 1px rgba(255, 255, 255, .5);
  }

  .status {
    height: 22px; flex: none; display: flex; align-items: stretch;
    padding: 0 7px 1px 1px; color: #1e3146; line-height: 22px;
  }
  .status span { padding: 0 8px 0 10px; border-right: 1px solid #4d5663; }
  .views { margin-left: auto; display: flex; align-items: center; gap: 7px; }

  .cursor {
    position: absolute; left: 679px; top: 175px; width: 12px; height: 20px;
    filter: drop-shadow(2px 2px 1px rgba(0, 0, 0, .4));
  }

  .taskbar {
    height: 40px; flex: none; box-sizing: border-box; display: flex; align-items: center;
    border-top: 1px solid #6a3300; color: #fff;
    background: linear-gradient(90deg, #a85c17, #c46b18 5%, #d87716 12%, #d97818 40%, #d3741a 66%, #dc7f24 70%, #d97b1e 85%, #b1662b 92%, #a45d20);
    box-shadow: inset 0 1px 0 #f3b678;
  }
  .start { padding: 0 13px 0 8px; }
  .start svg { width: 38px; height: 38px; }
  .tasks { flex: 1; display: flex; gap: 2px; }
  .task {
    width: 60px; height: 38px; display: grid; place-items: center;
    border: 1px solid transparent; border-radius: 3px; box-sizing: border-box;
  }
  .task .big { width: 32px; height: 32px; }
  .task.active {
    border-color: #6e3d16; background: linear-gradient(135deg, #f2d3b4, #dfa579 50%, #fbeada);
    box-shadow: inset 0 0 0 1px #fbe3c9;
  }
  .task.open {
    border-color: #7c4215; background: linear-gradient(#efb988, #dc8a3f 60%, #e0974f);
    box-shadow: inset 0 0 0 1px #f2bd88;
  }
  .net { margin-right: 10px; }
  .clock {
    display: flex; flex-direction: column; gap: 1px; margin-right: 5px; text-align: center; white-space: nowrap;
  }
  .peek {
    width: 14px; height: 38px; border: 1px solid #734012; border-right: 0; box-sizing: border-box;
    background: linear-gradient(135deg, #d5a06d, #8c5018 50%, #b06e30);
    box-shadow: inset 0 0 0 1px rgba(255, 220, 180, .5);
  }
</style>
